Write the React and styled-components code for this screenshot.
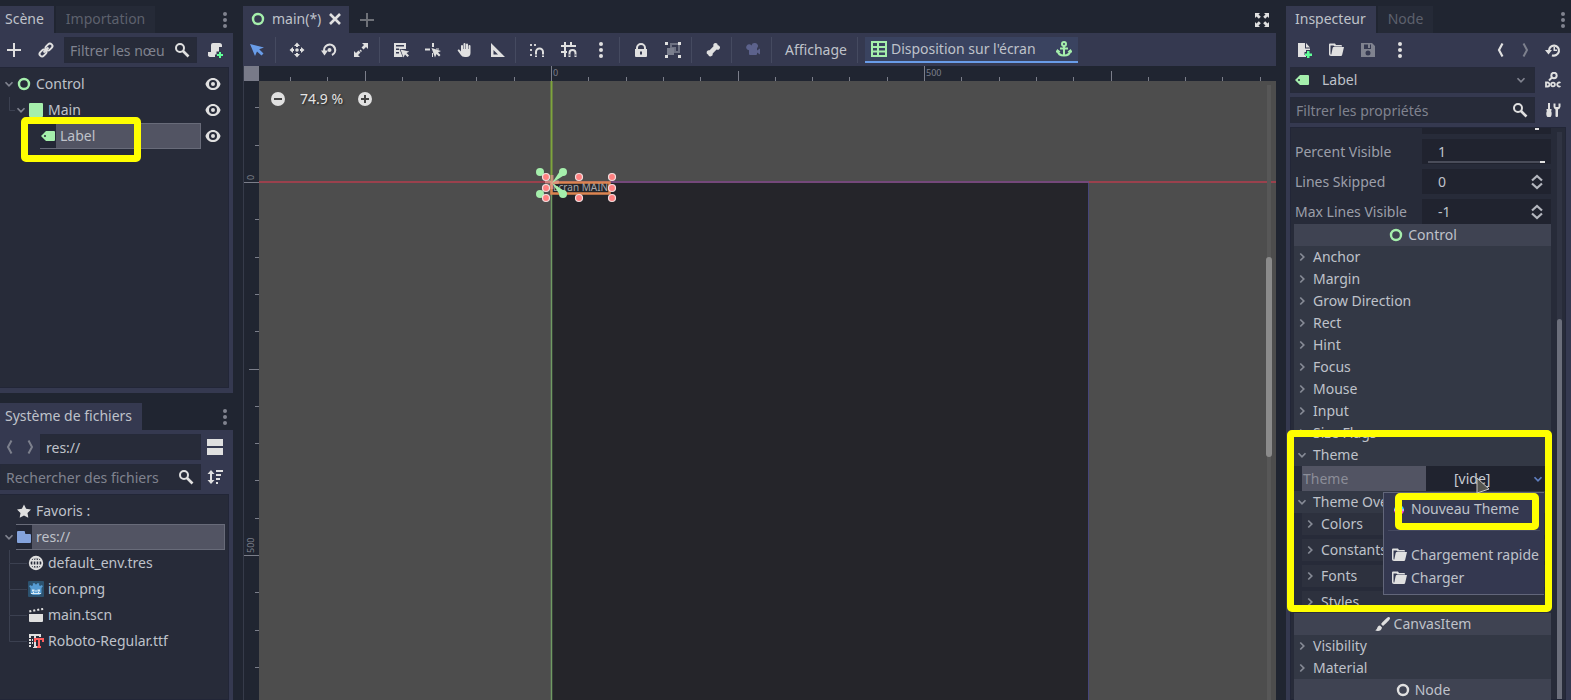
import React, { useState } from "react";
import styled, { createGlobalStyle, css } from "styled-components";

const c = {
  base: "#202531",
  panel: "#353950",
  well: "#272b39",
  field: "#20232f",
  section: "#333845",
  header: "#3f4352",
  selected: "#525463",
  text: "#bfc2ca",
  dim: "#80838f",
  faint: "#5d616d",
  icon: "#e0e0e0",
  green: "#a5efac",
  blue: "#699ce8",
  mark: "#ffff00",
};

const GlobalStyle = createGlobalStyle`
  * { box-sizing: border-box; }
  body { margin: 0; background: ${c.base}; color: ${c.text}; font: 14px/20px "Noto Sans", sans-serif; }
  button, input, select { font: inherit; color: inherit; background: none; border: 0; padding: 0; margin: 0; outline: none; }
  ul { list-style: none; margin: 0; padding: 0; }
  svg { display: block; flex: none; }
`;

/* ---------- icons ---------- */

const Svg = ({ size = 16, color = c.icon, children }) => (
  <svg width={size} height={size} viewBox="0 0 16 16" fill={color} aria-hidden="true">
    {children}
  </svg>
);
const stroke = (color, w = 2) => ({ fill: "none", stroke: color, strokeWidth: w });

const icons = {
  plus: <path d="M7 1h2v6h6v2H9v6H7V9H1V7h6z" />,
  link: (
    <g {...stroke(c.icon)} transform="rotate(-45 8 8)">
      <rect x="0" y="5.500" width="7.500" height="5" rx="2.500" />
      <rect x="8.500" y="5.500" width="7.500" height="5" rx="2.500" />
      <path d="M4.500 8h7" />
    </g>
  ),
  search: (
    <g {...stroke(c.icon)}>
      <circle cx="6" cy="6" r="4" />
      <path d="m9 9 5.500 5.500" strokeWidth="2.600" />
    </g>
  ),
  script: (
    <>
      <path d="M6 1a2 2 0 0 0-2 2v7H1v2a2.500 2.500 0 0 0 2 3h5v-2.500h1.500V9.500H12V5h3V3.500A2.500 2.500 0 0 0 12.500 1z" />
      <path d="M12 10h2v2h2v2h-2v2h-2v-2h-2v-2h2z" fill="#5fff97" />
    </>
  ),
  eye: (
    <path
      fillRule="evenodd"
      d="M8 2C4.500 2 1.700 4.500.600 7.600a1.500 1.500 0 0 0 0 .8C1.700 11.500 4.500 14 8 14s6.300-2.500 7.400-5.600a1.500 1.500 0 0 0 0-.8C14.300 4.500 11.500 2 8 2zm0 2a4 4 0 1 1 0 8 4 4 0 0 1 0-8zm0 2a2 2 0 1 0 0 4 2 2 0 0 0 0-4z"
    />
  ),
  ring: <circle cx="8" cy="8" r="5" {...stroke("currentColor", 2.4)} />,
  square: <rect x="1" y="1" width="14" height="14" rx="1" fill={c.green} />,
  label: (
    <path fill={c.green} fillRule="evenodd" d="M6 3 1 8l5 5h8a1 1 0 0 0 1-1V4a1 1 0 0 0-1-1zM5 7a1 1 0 1 1 0 2 1 1 0 0 1 0-2z" />
  ),
  star: <path d="m8 1.500 2.100 4.300 4.900.7-3.500 3.400.8 4.900L8 12.500l-4.300 2.300.8-4.900L1 6.500l4.900-.7z" />,
  folder: <path fill="#84a3dc" d="M2 2a1 1 0 0 0-1 1v10a1 1 0 0 0 1 1h12a1 1 0 0 0 1-1V6a1 1 0 0 0-1-1h-4a1 1 0 0 1-1-1V3a1 1 0 0 0-1-1z" />,
  globe: (
    <g {...stroke(c.icon, 1.4)}>
      <circle cx="8" cy="8" r="6.300" strokeWidth="1.800" />
      <ellipse cx="8" cy="8" rx="3" ry="6.300" />
      <path d="M2 5.800h12M2 10.200h12M8 2v12" />
    </g>
  ),
  godot: (
    <>
      <rect x="0" y="0" width="16" height="16" rx="1" fill="#2c526f" />
      <path fill="#559bd3" d="m2 4 2 1 1-1-.3-1.500L6.500 2l.6 1.300h1.800L9.500 2l1.800.5L11 4l1 1 2-1 .8 1.500L13.500 7v5.500L11 14H5l-2.500-1.500V7L1.200 5.500z" />
      <path d="M4 8.500h2.500v2H4zm5.500 0H12v2H9.500zM7.500 9h1v2h-1zM3 12h2v-1h1v1h4v-1h1v1h2v1H3z" fill="#d9ecf7" />
    </>
  ),
  clapper: (
    <path d="M1 7h14v7a1 1 0 0 1-1 1H2a1 1 0 0 1-1-1zM1 3.500l2-.4.600 2-2 .400zM5 2.700l2-.4.500 2-2 .4zM9 2l2-.4.500 2-2 .3zM13 1.200l2-.3.300 2-2 .4z" />
  ),
  font: (
    <>
      <path d="M1 1h12v3h-2V3H8v2h2v2H8v6h1v2H5v-1h1V3H3v2H1zM1 6h2v2H1zm3 0h1v2H4zM1 9h2v2H1zm3 0h1v2H4zM1 12h2v2H1z" />
      <path fill="#ff5f5f" d="M6 5h10v4h-2V7h-2v6h1v2H9v-2h1V7H8v2H6z" />
    </>
  ),
  split: <path d="M0 0h16v7H0zM0 9h16v7H0z" />,
  sort: (
    <path d="M4 1 .5 5H3v6H.5L4 15l3.500-4H5V5h2.500zM9 1h7v2H9zM9 5h5v2H9zM9 9h4v2H9zM9 13h2v2H9z" />
  ),
  close: <path {...stroke(c.icon, 2.6)} d="m3 3 10 10M13 3 3 13" />,
  expand: (
    <path d="M1 1h5L4.500 2.500l2.300 2.300-2 2-2.300-2.300L1 6zM15 1v5l-1.500-1.500-2.300 2.300-2-2 2.300-2.300L10 1zM1 15v-5l1.500 1.500 2.300-2.300 2 2-2.300 2.300L6 15zM15 15h-5l1.500-1.500-2.300-2.300 2-2 2.300 2.300L15 10z" />
  ),
  select: <path fill={c.blue} d="m1 2 5 12 2-4.500 4.500 4 2-2-4.300-4.200L15 5.500z" />,
  move: (
    <g>
      <path d="M8 .5 11 4H9v1H7V4H5zM8 15.500 11 12H9v-1H7v1H5zM.5 8 4 5v2h1v2H4v2zM15.500 8 12 5v2h-1v2h1v2z" />
      <circle cx="8" cy="8" r="1.800" />
    </g>
  ),
  rotate: (
    <g>
      <path d="M3.500 10A5.500 5.500 0 1 1 11 13" {...stroke(c.icon, 2.2)} />
      <path d="M0 8.500h7L3.500 13.500z" />
      <circle cx="8.500" cy="8" r="2" />
    </g>
  ),
  scale: (
    <path d="M9 1h6v6l-2-2-2.500 2.500-2-2L11 3zM1 9l2 2 2.500-2.500 2 2L5 13l2 2H1zM6.500 8.500l1-1 1.500 1.500-1 1z" />
  ),
  list: (
    <>
      <path fillRule="evenodd" d="M1 1h12v6H6.500l3 7.500V15H1zm2 2v1.500h8V3zm0 3.500V8h3V6.500zM3 10v1.500h3V10z" />
      <path d="m7.500 7.500 3 8 1.500-3 2.500 2.500 1.500-1.500-2.500-2.500 3-1.500z" />
    </>
  ),
  pivot: (
    <>
      <path d="M7 1h2v4H7zM0 6.500h5v2H0zM11 6.500h3v1h-3zM7 11h1v4H7z" />
      <path d="m6.500 6 3.500 9.500 1.500-3.500 2.500 2.500 1.500-1.500-2.500-2.500 3-1.500z" />
    </>
  ),
  hand: (
    <path d="M7.500 1a1 1 0 0 1 1 1v5H9V2.500a1 1 0 0 1 2 0V7h.5V4a1 1 0 0 1 2 0v7c0 2.500-1.500 4-4 4H8c-2 0-3.500-.8-4.500-2.500L.8 8.800c-.5-1 .8-1.800 1.600-1L4 9.500V4a1 1 0 0 1 2 0v3h.5V2a1 1 0 0 1 1-1z" />
  ),
  angle: <path fillRule="evenodd" d="M2 1v14h14zm2.500 7 4.500 4.500H4.500z" />,
  snap: (
    <>
      <path d="M1 2h2v2H1zM5 2h2v2H5zM1 7h2v2H1zM1 12h2v2H1z" opacity=".9" />
      <path d="M7 15v-5a3.500 3.500 0 0 1 7 0v5" {...stroke(c.icon)} />
      <path d="M6 13h2M13 13h2" stroke={c.panel} />
    </>
  ),
  gridSnap: (
    <>
      <path d="M3 0h2v3h4V0h2v3h4v2H5v4h1v2H5v4H3v-4H0V9h3V5H0V3h3z" />
      <path d="M8.500 15v-4a3 3 0 0 1 6 0v4" {...stroke(c.icon)} />
      <path d="M7.500 13h2M13.500 13h2" stroke={c.panel} />
    </>
  ),
  dots: (
    <>
      <circle cx="8" cy="2" r="2" />
      <circle cx="8" cy="8" r="2" />
      <circle cx="8" cy="14" r="2" />
    </>
  ),
  lock: (
    <path fillRule="evenodd" d="M8 1a5 5 0 0 0-5 5v1H2v7a1 1 0 0 0 1 1h10a1 1 0 0 0 1-1V7h-1V6a5 5 0 0 0-5-5zm0 2a3 3 0 0 1 3 3v1H5V6a3 3 0 0 1 3-3zM7 9.500h2v3H7z" />
  ),
  group: (
    <>
      <path d="M6 2h8v8h-4V6H6z" fill="none" stroke="#6d7182" strokeWidth="2" />
      <path d="M2 6h7v7H2z" fill="#7b7f8e" />
      <path d="M0 0h3v3H0zM13 0h3v3h-3zM0 13h3v3H0zM13 13h3v3h-3z" />
    </>
  ),
  bone: (
    <path d="M10.500 1a2.300 2.300 0 0 0-2 3.300L4.600 8.300A2.300 2.300 0 1 0 3.200 12.700 2.300 2.300 0 1 0 7.700 11.400l3.900-3.900A2.300 2.300 0 1 0 12.800 3.200 2.300 2.300 0 0 0 10.500 1z" />
  ),
  camera: (
    <path fill="#5c628c" d="M9.500 1a3 3 0 0 0-3 2.400A3 3 0 1 0 4 8.300V12a1 1 0 0 0 1 1h6a1 1 0 0 0 1-1v-1.500l3 2v-6l-3 2V6.200A3 3 0 0 0 9.500 1z" />
  ),
  layout: <path fill={c.green} fillRule="evenodd" d="M0 0h16v16H0zm2 2v3h4V2zm6 0v3h6V2zM2 7v2.500h4V7zm6 0v2.500h6V7zM2 11.500V14h4v-2.500zm6 0V14h6v-2.500z" />,
  anchor: (
    <g {...stroke(c.green)}>
      <circle cx="8" cy="3" r="2" />
      <path d="M8 5v10M4 7.500h8M1.500 9.500C2 13 5 14.500 8 14.500s6-1.500 6.500-5" />
      <path d="m0 11.500 1.500-2.500 2.500 2M16 11.500 14.500 9 12 11" strokeWidth="1.300" />
    </g>
  ),
  fileNew: (
    <>
      <path d="M2 1v14h8v-2H8.500V10H10V8h4V6.500H9V1zM10 1v4.500h4z" />
      <path d="M11 9h2.500v2.500H16V14h-2.500v2H11v-2H9v-2.500h2z" fill="#5fff97" />
    </>
  ),
  open: (
    <path d="M2 1.500a1 1 0 0 0-1 1V12c0 1 .7 2 2 2h9.500c1 0 1.500-.6 1.700-1.300L16 5H6c-.8 0-1.200.5-1.400 1.200L3.300 12.500C2.700 12.500 2.500 12 2.500 11.500V3.500h3l1 1h7.500V4a1 1 0 0 0-1-1H8L7 1.500z" />
  ),
  save: (
    <path fill="#80838f" fillRule="evenodd" d="M1 1v14h14V4l-3-3zm3 1.500h7V7H4zM8 2.500v3.500h2V2.500zM8 8.500a2.500 2.500 0 1 1 0 5 2.500 2.500 0 0 1 0-5z" />
  ),
  back: <path {...stroke(c.icon, 2.2)} d="M9.500 1.500 6 8l3.500 6.500" />,
  backDim: <path {...stroke("#7d808d", 2)} d="M9.500 1.500 6 8l3.500 6.500" />,
  forward: <path {...stroke("#7d808d", 2)} d="M6.500 1.500 10 8l-3.500 6.500" />,
  history: (
    <g>
      <path d="M4 9a5 5 0 1 1 3 4.200" {...stroke(c.icon, 2.2)} />
      <path d="M0 8h7l-3.500 4.500zM8.500 5H10v2.500h2V9H8.500z" />
    </g>
  ),
  doc: (
    <>
      <circle cx="9" cy="3.500" r="2.700" {...stroke(c.icon)} />
      <path d="M7 5.500 4 8.500" {...stroke(c.icon)} />
      <path d="M1 10.500h1.500a2 2 0 0 1 0 4H1zM15.500 10.900a2 2 0 1 0 0 3.200" {...stroke(c.icon, 1.8)} />
      <circle cx="8" cy="12.500" r="1.900" {...stroke(c.icon, 1.8)} />
    </>
  ),
  tools: (
    <path d="M3 1h2v6h1.500v1.500L6 9c1 1 1 5-.5 6h-3C1 14 1 10 2 9l-.5-.5V7H3zM8.500 1.500v3a3.500 3.500 0 0 0 2 3V14c0 1.300 2.500 1.300 2.500 0V7.500a3.500 3.500 0 0 0 2.500-3v-3h-2V5h-3V1.500z" />
  ),
  brush: <path d="M14.500 1c-1 0-6 5-7.500 7l2 2c2-1.500 7-6.500 7-7.500S15.500 1 14.500 1zM6 9.500c-2 0-2.500 1.500-3 3-.2.800-1 1.500-2 1.500 2 1.800 6.500 1.500 7-2.500z" />,
  down: <path {...stroke("currentColor", 2)} d="m4 6 4 4 4-4" />,
  right: <path {...stroke("currentColor", 2)} d="m6 4 4 4-4 4" />,
  updown: <path {...stroke("#b4b7bf", 2.2)} d="M3 6.500 8 2l5 4.500M3 9.500 8 14l5-4.500" />,
  theme: (
    <>
      <path d="M8 4a5 5 0 0 0-5 5h10a5 5 0 0 0-5-5z" fill="#45d7ff" />
      <path d="M3 9a5 5 0 0 0 10 0z" fill="#ff45d0" />
      <path d="M3 8h10v2H3z" fill="#b9a8ff" />
    </>
  ),
  zoomOut: (
    <>
      <circle cx="8" cy="8" r="7" />
      <path d="M4 7h8v2H4z" fill="#444" />
    </>
  ),
  zoomIn: (
    <>
      <circle cx="8" cy="8" r="7" />
      <path d="M4 7h8v2H4zM7 4h2v8H7z" fill="#444" />
    </>
  ),
};

const Icon = ({ name, size, color }) => <Svg size={size} color={color}>{icons[name]}</Svg>;

/* ---------- shell ---------- */

const Editor = styled.div`
  display: grid;
  grid-template-columns: 233px minmax(0, 1fr) 285px;
  gap: 10px;
  height: 100vh;
  padding-top: 6px;
  overflow: hidden;
`;
const LeftDocks = styled.aside`
  display: grid;
  grid-template-rows: minmax(0, 387fr) minmax(0, 297fr);
  gap: 10px;
`;
const Dock = styled.section`
  display: flex;
  flex-direction: column;
  min-width: 0;
  min-height: 0;
`;
const Tabs = styled.div`
  display: flex;
  align-items: center;
  height: 27px;
  flex: none;
  padding-right: ${(p) => p.$end ?? 0}px;
`;
const Tab = styled.button`
  height: 100%;
  padding: 0 10px 2px ${(p) => p.$left ?? 10}px;
  display: flex;
  align-items: center;
  gap: 6px;
  margin-right: 2px;
  white-space: nowrap;
  background: ${(p) => (p.$active ? c.panel : "#252a37")};
  color: ${(p) => (p.$active ? c.text : c.faint)};
`;
const SceneTab = styled(Tab)`
  padding-left: 7px;
  padding-right: 6px;
`;
const Spacer = styled.span`
  flex: 1;
`;
const DockBody = styled.div`
  flex: 1;
  min-height: 0;
  display: flex;
  flex-direction: column;
  gap: 4px;
  background: ${c.panel};
  padding: 4px 4px ${(p) => p.$bottom ?? 0}px ${(p) => p.$left ?? 0}px;
`;
const Bar = styled.div`
  display: flex;
  align-items: center;
  flex: none;
  height: 26px;
  gap: ${(p) => p.$gap ?? 4}px;
`;
const IconButton = styled.button`
  width: ${(p) => p.$w ?? 28}px;
  height: 26px;
  flex: none;
  display: grid;
  place-items: center;
  color: ${c.text};
`;
const FieldBox = styled.div`
  flex: 1;
  min-width: 0;
  height: 26px;
  display: flex;
  align-items: center;
  gap: 4px;
  padding: 0 6px 0 ${(p) => p.$left ?? 5}px;
  background: ${c.well};
  color: ${c.dim};
  border: 1px solid #262a3a;
`;
const TextInput = styled.input`
  flex: 1;
  width: 0;
  height: 24px;
  color: ${c.text};
  &::placeholder { color: ${c.dim}; opacity: 1; }
`;
const NodeSelect = styled.select`
  flex: 1;
  width: 0;
  height: 24px;
  padding-left: 8px;
  appearance: none;
  color: ${c.text};
`;

/* ---------- trees ---------- */

const Tree = styled.ul`
  flex: 1;
  min-height: 0;
  background: ${c.well};
  border: 1px solid #222637;
  border-left: 0;
  padding-top: 3px;
`;
const TreeRow = styled.li`
  position: relative;
  display: flex;
  align-items: center;
  height: 26px;
  padding-left: ${(p) => 2 + p.$depth * 12}px;
  padding-right: ${(p) => p.$end}px;
`;
const Fold = styled.span`
  width: 14px;
  height: 16px;
  display: grid;
  place-items: center;
  flex: none;
  color: #80838f;
`;
const TreeItem = styled.button`
  flex: 1;
  height: 26px;
  display: flex;
  align-items: center;
  gap: 4px;
  color: ${c.text};
  text-align: left;
  border: 1px solid transparent;
  border-left-width: 0;
  ${(p) =>
    p.$selected &&
    css`
      background: linear-gradient(90deg, #232735 16px, ${c.selected} 16px);
      border-color: #686b79;
    `}
`;
const RowEye = styled.button`
  width: 16px;
  margin-left: 4px;
`;
const Guide = styled.svg`
  position: absolute;
  left: 9px;
  bottom: 12px;
`;
const Mark = styled.span`
  position: absolute;
  pointer-events: none;
  border: 7px solid ${c.mark};
  border-radius: 5px;
  z-index: 3;
`;
const LabelMark = styled(Mark)`
  left: 21px;
  top: -6px;
  width: 120px;
  height: 45px;
`;

/* ---------- centre ---------- */

const Divider = styled.span`
  width: 4px;
  height: 26px;
  flex: none;
  border-left: 1px solid #454a60;
`;
const Toolbar = styled.div`
  display: flex;
  align-items: center;
  gap: 4px;
  height: 33px;
  flex: none;
  background: ${c.panel};
`;
const MenuButton = styled.button`
  height: 26px;
  padding: 0 6px;
  white-space: nowrap;
`;
const LayoutGroup = styled.div`
  display: flex;
  align-items: center;
  height: 26px;
  padding: 0 6px;
  gap: 20px;
  background: #3a4360;
  border-bottom: 2px solid ${c.blue};
`;
const LayoutButton = styled.button`
  display: flex;
  align-items: center;
  gap: 4px;
  white-space: nowrap;
`;
const CanvasGrid = styled.div`
  flex: 1;
  min-height: 0;
  display: grid;
  grid-template: 15px minmax(0, 1fr) / 15px minmax(0, 1fr);
  border-left: 1px solid #363b4a;
  background: ${c.base};
`;
const Corner = styled.div`
  background: #787a88;
`;
const Ruler = styled.svg`
  width: 100%;
  height: 100%;
  overflow: hidden;
  font: 9px "Noto Sans", sans-serif;
`;
const Viewport = styled.div`
  position: relative;
  background: #4d4d4d;
  overflow: hidden;
`;
const Scene = styled.svg`
  width: 100%;
  height: 100%;
  position: absolute;
  inset: 0;
`;
const ZoomBar = styled.div`
  position: absolute;
  left: 11px;
  top: 8px;
  display: flex;
  align-items: center;
  gap: 14px;
  color: #e4e4e4;
  text-shadow: 1px 1px 2px #222;
`;
const ScrollTrack = styled.div`
  position: absolute;
  right: 5px;
  top: 4px;
  bottom: 0;
  width: 4px;
  background: #575757;
`;
const ScrollThumb = styled.div`
  position: absolute;
  left: -1px;
  top: 28%;
  width: 6px;
  height: 200px;
  border-radius: 3px;
  background: #8b8b8b;
`;

/* ---------- inspector ---------- */

const Properties = styled.div`
  flex: 1;
  min-height: 0;
  position: relative;
  background: ${c.well};
  border: 1px solid #222637;
  padding: 0 14px 0 3px;
  margin-right: 1px;
`;
const Stack = styled.div`
  display: flex;
  flex-direction: column;
  gap: ${(p) => p.$gap ?? 0}px;
`;
const PropertyRow = styled.div`
  display: grid;
  grid-template-columns: minmax(0, 1fr) 129px;
  align-items: center;
  height: 25px;
  color: #9c9fa9;
`;
const ClippedRow = styled(PropertyRow)`
  height: 6px;
`;
const PropertyLabel = styled.label`
  white-space: nowrap;
  padding-left: 1px;
`;
const ValueBox = styled.div`
  height: ${(p) => p.$h ?? 25}px;
  padding: 0 6px 0 16px;
  background: ${c.field};
  position: relative;
  display: flex;
  align-items: center;
  color: ${c.text};
`;
const NumberInput = styled.input`
  flex: 1;
  width: 0;
  appearance: textfield;
  &::-webkit-inner-spin-button { appearance: none; }
`;
const Slider = styled.input`
  position: absolute;
  left: 6px;
  bottom: 1px;
  width: calc(100% - 12px);
  height: 2px;
  appearance: none;
  background: #4a4d5a;
  &::-webkit-slider-thumb { appearance: none; width: 5px; height: 2px; background: ${c.icon}; }
`;
const Grabber = styled.span`
  width: 4px;
  height: 2px;
  margin: 0 6px 4px auto;
  background: ${c.icon};
`;
const ClassHeader = styled.h3`
  margin: 0;
  height: 22px;
  font: inherit;
  display: flex;
  align-items: center;
  justify-content: center;
  gap: 4px;
  background: ${c.header};
`;
const Section = styled.button`
  display: flex;
  align-items: center;
  height: 22px;
  gap: 3px;
  margin-left: ${(p) => (p.$nested ? 8 : 0)}px;
  background: ${(p) => (p.$nested ? "#2d313e" : c.section)};
  white-space: nowrap;
`;
const SectionFold = styled.span`
  display: grid;
  place-items: center;
  width: 16px;
  color: #868a95;
`;
const ThemeArea = styled.div`
  position: relative;
`;
const ThemeRow = styled(PropertyRow)`
  margin-left: 8px;
  grid-template-columns: minmax(0, 1fr) 125px;
`;
const ThemeLabel = styled.label`
  height: 25px;
  line-height: 25px;
  padding-left: 1px;
  color: #8b8d98;
  background: ${c.selected};
`;
const ResourceButton = styled.button`
  height: 25px;
  display: flex;
  align-items: center;
  padding: 0 6px 0 28px;
  justify-content: space-between;
  background: ${c.field};
  color: #c9ccd4;
`;
const Popup = styled.div`
  position: absolute;
  top: 48px;
  right: 7px;
  width: 161px;
  padding: 4px 0 5px;
  background: #343850;
  border: 1px solid #62667a;
  border-right: 0;
  z-index: 1;
`;
const PopupItem = styled.button`
  display: flex;
  align-items: center;
  gap: 4px;
  width: 100%;
  height: 23px;
  padding-left: 7px;
  white-space: nowrap;
`;
const PopupLine = styled.hr`
  margin: 10px 4px 12px;
  border: 0;
  height: 1px;
  background: #454961;
`;
const ThemeMark = styled(Mark)`
  inset: -14px -1px 1px -7px;
`;
const NewThemeMark = styled(Mark)`
  inset: 0 5px 64px 11px;
`;
const Pointer = styled.svg`
  position: absolute;
  top: 34px;
  right: 61px;
  z-index: 2;
`;
const ListTrack = styled.div`
  position: absolute;
  top: 4px;
  bottom: 0;
  right: 3px;
  width: 5px;
  background: #303443;
`;
const ListThumb = styled.div`
  position: absolute;
  top: 33%;
  bottom: 0;
  width: 5px;
  border-radius: 3px 3px 0 0;
  background: #6b6e7b;
`;
const Green = styled.span`
  color: ${c.green};
`;
const White = styled.span`
  color: ${c.icon};
`;
const Blue = styled.span`
  color: #5f7fc0;
`;

/* ---------- parts ---------- */

const STEP = 37.3;
const ORIGIN_X = 292;
const ORIGIN_Y = 101;
const DEPTH = 15;

function Ticks({ vertical }) {
  const origin = vertical ? ORIGIN_Y : ORIGIN_X;
  const out = [];
  for (let i = -8; i <= 60; i++) {
    const p = Math.round(origin + i * STEP);
    if (p < 0) continue;
    const len = i % 10 === 0 ? DEPTH : i % 5 === 0 ? 10 : 4;
    const d = vertical ? `M${DEPTH - len} ${p + 0.5}h${len}` : `M${p + 0.5} ${DEPTH - len}v${len}`;
    out.push(<path key={i} d={d} stroke="#7b7e8a" />);
    if (i === 0 || i === 10)
      out.push(
        vertical ? (
          <text key={"t" + i} fill="#7b7e8a" transform={`translate(10 ${p - 2}) rotate(-90)`}>{i * 50}</text>
        ) : (
          <text key={"t" + i} fill="#7b7e8a" x={p + 2} y="10">{i * 50}</text>
        )
      );
  }
  return <Ruler aria-hidden="true">{out}</Ruler>;
}

const handles = [[287, 96], [320, 96], [353, 96], [287, 107], [353, 107], [287, 117], [320, 117], [353, 117]];
const anchors = [[281, 91], [304, 91], [281, 113], [304, 113]];

const SceneView = () => (
  <Scene>
    <rect x="293" y="101" width="536" height="100%" fill="#25252a" />
    <path d="M829.5 101v2000" stroke="#46457a" strokeWidth="1" />
    <path d="M0 101h4000" stroke="#a83f4e" strokeWidth="2" opacity=".85" />
    <path d="M293 101h537" stroke="#74487a" strokeWidth="2" />
    <path d="M292.5 0v101" stroke="#7ea53c" strokeWidth="2" />
    <path d="M292.5 101v2000" stroke="#6f9a63" strokeWidth="1.500" />
    <text x="294" y="110" fill="#a9a9ac" fontSize="10" fontFamily="Noto Sans, sans-serif">Écran MAIN</text>
    <rect x="292.500" y="101.500" width="58" height="11" fill="none" stroke="#dc8450" strokeWidth="2.500" />
    <path d="M286 101h14M293 94v14" stroke="#e69a92" strokeWidth="3" opacity=".7" />
    {anchors.map(([x, y]) => (
      <g key={x + "-" + y} fill={c.green}>
        <circle cx={x} cy={y} r="4" />
        <path d={`M293 102 ${x - 3} ${y + (y < 101 ? -1 : 1)} ${x + 3} ${y + (y < 101 ? 2 : -2)}z`} />
      </g>
    ))}
    {handles.map(([x, y]) => (
      <circle key={x + "-" + y} cx={x} cy={y} r="3.500" fill="#ff8080" stroke="#f3dcdc" strokeWidth="1.200" />
    ))}
  </Scene>
);

const Search = ({ label }) => (
  <FieldBox>
    <TextInput placeholder={label} aria-label={label} />
    <Icon name="search" />
  </FieldBox>
);

const Tool = ({ name, label }) => (
  <IconButton aria-label={label}>
    <Icon name={name} />
  </IconButton>
);

const DockMenu = () => (
  <IconButton $w={16} aria-label="Options du dock">
    <Icon name="dots" color="#80838f" />
  </IconButton>
);

function NodeRow({ depth, icon, text, open, selected, children, eye }) {
  return (
    <TreeRow $depth={depth} $end={eye ? 7 : 3}>
      <Fold>{open && <Icon name="down" size={14} />}</Fold>
      <TreeItem $selected={selected}>
        {icon === "ring" ? <Green><Icon name="ring" /></Green> : <Icon name={icon} />}
        {text}
      </TreeItem>
      {eye && (
        <RowEye aria-label={`Visibilité ${text}`}>
          <Icon name="eye" />
        </RowEye>
      )}
      {children}
    </TreeRow>
  );
}

const Branch = ({ height = 26, width = 18 }) => (
  <Guide width={width} height={height}>
    <path d={`M.5 0v${height - 0.5}H${width}`} fill="none" stroke="#3b4050" />
  </Guide>
);

const SectionRow = ({ text, open, nested }) => (
  <Section $nested={nested} aria-expanded={!!open}>
    <SectionFold><Icon name={open ? "down" : "right"} size={14} /></SectionFold>
    {text}
  </Section>
);

function NumberRow({ id, label, initial, slider }) {
  const [value, setValue] = useState(initial);
  const change = (e) => setValue(e.target.value);
  return (
    <PropertyRow>
      <PropertyLabel htmlFor={id}>{label}</PropertyLabel>
      <ValueBox>
        <NumberInput id={id} type="number" value={value} onChange={change} />
        {slider ? (
          <Slider type="range" min="0" max="1" step="0.01" value={value} onChange={change} aria-label={label} />
        ) : (
          <Icon name="updown" />
        )}
      </ValueBox>
    </PropertyRow>
  );
}

/* ---------- docks ---------- */

const SceneDock = () => (
  <Dock>
    <Tabs>
      <Tab $active $left={5}>Scène</Tab>
      <Tab>Importation</Tab>
      <Spacer />
      <DockMenu />
    </Tabs>
    <DockBody $bottom={5}>
      <Bar>
        <IconButton aria-label="Ajouter un nœud"><Icon name="plus" /></IconButton>
        <IconButton aria-label="Instancier une scène"><Icon name="link" /></IconButton>
        <Search label="Filtrer les nœu" />
        <IconButton aria-label="Attacher un script"><Icon name="script" /></IconButton>
      </Bar>
      <Tree>
        <NodeRow eye depth={0} icon="ring" text="Control" open />
        <NodeRow eye depth={1} icon="square" text="Main" open><Branch height={14} width={6} /></NodeRow>
        <NodeRow eye depth={2} icon="label" text="Label" selected><LabelMark /></NodeRow>
      </Tree>
    </DockBody>
  </Dock>
);

const FileDock = () => (
  <Dock>
    <Tabs>
      <Tab $active $left={5}>Système de fichiers</Tab>
      <Spacer />
      <DockMenu />
    </Tabs>
    <DockBody>
      <Bar $gap={0}>
        <IconButton $w={20} aria-label="Précédent"><Icon name="backDim" /></IconButton>
        <IconButton $w={20} aria-label="Suivant"><Icon name="forward" /></IconButton>
        <FieldBox><TextInput defaultValue="res://" aria-label="Chemin" /></FieldBox>
        <IconButton aria-label="Diviser l'affichage"><Icon name="split" /></IconButton>
      </Bar>
      <Bar $gap={0}>
        <Search label="Rechercher des fichiers" />
        <IconButton aria-label="Trier"><Icon name="sort" /></IconButton>
      </Bar>
      <Tree>
        <NodeRow depth={0} icon="star" text="Favoris :" />
        <NodeRow depth={0} icon="folder" text="res://" open selected />
        <NodeRow depth={1} icon="globe" text="default_env.tres"><Branch height={14} /></NodeRow>
        <NodeRow depth={1} icon="godot" text="icon.png"><Branch /></NodeRow>
        <NodeRow depth={1} icon="clapper" text="main.tscn"><Branch /></NodeRow>
        <NodeRow depth={1} icon="font" text="Roboto-Regular.ttf"><Branch /></NodeRow>
      </Tree>
    </DockBody>
  </Dock>
);

const CanvasDock = () => (
  <Dock as="main">
    <Tabs $end={6}>
      <SceneTab $active>
        <Green><Icon name="ring" /></Green>
        main(*)
        <Icon name="close" />
      </SceneTab>
      <IconButton $w={32} aria-label="Nouvelle scène"><Icon name="plus" color="#6e7178" /></IconButton>
      <Spacer />
      <IconButton $w={16} aria-label="Mode sans distraction"><Icon name="expand" /></IconButton>
    </Tabs>
    <Toolbar>
      <Tool name="select" label="Sélection" />
      <Divider />
      <Tool name="move" label="Déplacer" />
      <Tool name="rotate" label="Pivoter" />
      <Tool name="scale" label="Échelle" />
      <Divider />
      <Tool name="list" label="Liste" />
      <Tool name="pivot" label="Pivot" />
      <Tool name="hand" label="Panoramique" />
      <Tool name="angle" label="Règle" />
      <Divider />
      <Tool name="snap" label="Aimantation" />
      <Tool name="gridSnap" label="Aimanter à la grille" />
      <Tool name="dots" label="Options d'aimantation" />
      <Divider />
      <Tool name="lock" label="Verrouiller" />
      <Tool name="group" label="Grouper" />
      <Divider />
      <Tool name="bone" label="Squelette" />
      <Divider />
      <Tool name="camera" label="Caméra" />
      <Divider />
      <MenuButton>Affichage</MenuButton>
      <Divider />
      <LayoutGroup>
        <LayoutButton><Icon name="layout" />Disposition sur l'écran</LayoutButton>
        <button aria-label="Ancres"><Icon name="anchor" /></button>
      </LayoutGroup>
    </Toolbar>
    <CanvasGrid>
      <Corner />
      <Ticks />
      <Ticks vertical />
      <Viewport>
        <SceneView />
        <ZoomBar>
          <button aria-label="Dézoomer"><Icon name="zoomOut" /></button>
          74.9 %
          <button aria-label="Zoomer"><Icon name="zoomIn" /></button>
        </ZoomBar>
        <ScrollTrack><ScrollThumb /></ScrollTrack>
      </Viewport>
    </CanvasGrid>
  </Dock>
);

const controlSections = ["Anchor", "Margin", "Grow Direction", "Rect", "Hint", "Focus", "Mouse", "Input", "Size Flags"];

const InspectorDock = () => (
  <Dock>
    <Tabs>
      <Tab $active $left={9}>Inspecteur</Tab>
      <Tab>Node</Tab>
      <Spacer />
      <DockMenu />
    </Tabs>
    <DockBody $left={4}>
      <Bar>
        <Tool name="fileNew" label="Nouvelle ressource" />
        <Tool name="open" label="Ouvrir une ressource" />
        <Tool name="save" label="Enregistrer" />
        <Tool name="dots" label="Plus d'options" />
        <Spacer />
        <IconButton $w={20} aria-label="Précédent"><Icon name="back" /></IconButton>
        <IconButton $w={20} aria-label="Suivant"><Icon name="forward" /></IconButton>
        <Tool name="history" label="Historique" />
      </Bar>
      <Bar>
        <FieldBox $left={3}>
          <Icon name="label" />
          <NodeSelect aria-label="Nœud"><option>Label</option></NodeSelect>
          <Icon name="down" size={14} />
        </FieldBox>
        <Tool name="doc" label="Documentation" />
      </Bar>
      <Bar>
        <Search label="Filtrer les propriétés" />
        <Tool name="tools" label="Outils" />
      </Bar>
      <Properties>
        <Stack $gap={5}>
          <ClippedRow><span /><ValueBox $h={6}><Grabber /></ValueBox></ClippedRow>
          <NumberRow id="percent" label="Percent Visible" initial="1" slider />
          <NumberRow id="skipped" label="Lines Skipped" initial="0" />
          <NumberRow id="maxlines" label="Max Lines Visible" initial="-1" />
        </Stack>
        <Stack>
          <ClassHeader><Green><Icon name="ring" /></Green>Control</ClassHeader>
          {controlSections.map((s) => <SectionRow key={s} text={s} />)}
        </Stack>
        <ThemeArea>
          <Stack>
            <SectionRow text="Theme" open />
            <ThemeRow>
              <ThemeLabel htmlFor="theme">Theme</ThemeLabel>
              <ResourceButton id="theme" aria-haspopup="menu">
                [vide]
                <Blue><Icon name="down" size={14} /></Blue>
              </ResourceButton>
            </ThemeRow>
            <SectionRow text="Theme Overrides" open />
          </Stack>
          <Stack $gap={4}>
            {["Colors", "Constants", "Fonts", "Styles"].map((s) => <SectionRow key={s} text={s} nested />)}
          </Stack>
          <Popup>
            <PopupItem><Icon name="theme" />Nouveau Theme</PopupItem>
            <PopupLine />
            <PopupItem><Icon name="open" />Chargement rapide</PopupItem>
            <PopupItem><Icon name="open" />Charger</PopupItem>
            <NewThemeMark />
          </Popup>
          <Pointer width="14" height="16" viewBox="0 0 14 16" aria-hidden="true">
            <path d="M1 0v15l12-4z" fill="#55554f" stroke="#c4c4c4" />
          </Pointer>
          <ThemeMark />
        </ThemeArea>
        <Stack>
          <ClassHeader><Icon name="brush" />CanvasItem</ClassHeader>
          <SectionRow text="Visibility" />
          <SectionRow text="Material" />
          <ClassHeader><White><Icon name="ring" /></White>Node</ClassHeader>
        </Stack>
        <ListTrack><ListThumb /></ListTrack>
      </Properties>
    </DockBody>
  </Dock>
);

export default function App() {
  return (
    <>
      <GlobalStyle />
      <Editor>
        <LeftDocks>
          <SceneDock />
          <FileDock />
        </LeftDocks>
        <CanvasDock />
        <InspectorDock />
      </Editor>
    </>
  );
}
